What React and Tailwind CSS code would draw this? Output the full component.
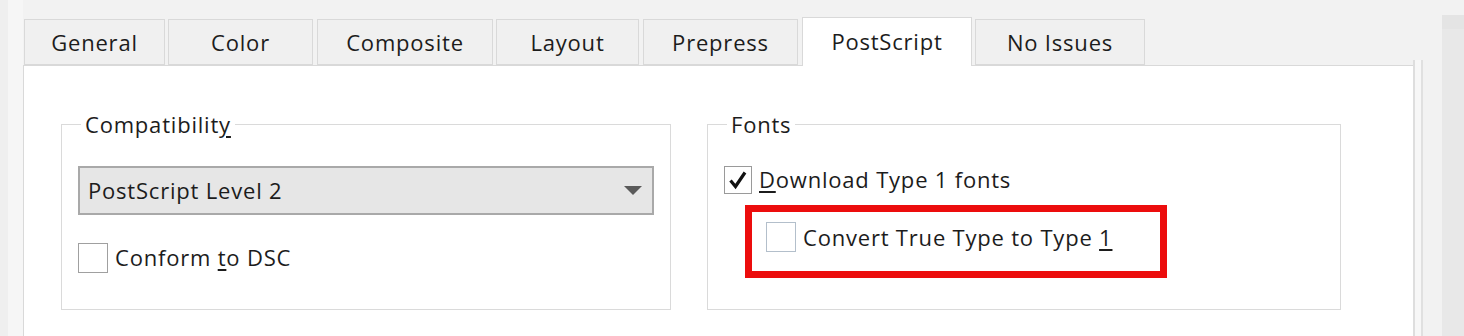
import React from 'react';

const tabs = [
  { label: 'General', cls: 'w-[141px]' },
  { label: 'Color', cls: 'w-[145px] ml-[3px]' },
  { label: 'Composite', cls: 'w-[176px] ml-[4px]' },
  { label: 'Layout', cls: 'w-[143px] ml-[3px]' },
  { label: 'Prepress', cls: 'w-[155px] ml-[4px]' },
  { label: 'PostScript', cls: 'w-[170px] ml-[4px]', active: true },
  { label: 'No Issues', cls: 'w-[170px] ml-[3px]' },
];

function Check({ checked, className = '' }) {
  return (
    <span className={`flex items-center justify-center bg-white border ${className}`}>
      {checked && (
        <svg width="22" height="22" viewBox="0 0 22 22">
          <path d="M3.5 11.5 L8.5 17.5 L18 3.5" fill="none" stroke="#111" strokeWidth="3.2" strokeLinejoin="miter" />
        </svg>
      )}
    </span>
  );
}

function Group({ title, className = '', children }) {
  return (
    <fieldset className={`border border-[#dadada] h-[200px] px-[16px] pt-[25px] ${className}`}>
      <legend className="ml-[3px] px-[4px] leading-[28px]">{title}</legend>
      {children}
    </fieldset>
  );
}

export default function App() {
  return (
    <div
      className="w-[1464px] h-[336px] overflow-hidden flex bg-[#f2f2f2] text-[22px] tracking-[0.8px] text-[#1c1c1c]"
      style={{ fontFamily: '"Open Sans", "Noto Sans", sans-serif' }}
    >
      <div className="w-[8px] shrink-0 bg-[#efefef]" />
      <div className="w-[15px] shrink-0 bg-[#f6f6f6]" />

      <div className="w-[1390px] shrink-0 pt-[17px] flex flex-col">
        <div className="flex items-end h-[48px] pl-[1px]">
          {tabs.map((t) =>
            t.active ? (
              <div
                key={t.label}
                className={`${t.cls} h-[49px] -mb-[1px] relative z-10 bg-white border border-b-0 border-[#d9d9d9] flex items-center justify-center pb-[1px]`}
              >
                {t.label}
              </div>
            ) : (
              <div
                key={t.label}
                className={`${t.cls} h-[46px] bg-[#f0f0f0] border border-[#d9d9d9] flex items-center justify-center pt-[1px]`}
              >
                {t.label}
              </div>
            )
          )}
        </div>

        <div className="flex-1 bg-white border-l border-t border-[#d9d9d9] pl-[37px] pt-[44px] flex gap-[36px]">
          <Group title={<>Compatibilit<span className="underline underline-offset-[3px]">y</span></>} className="w-[610px]">
            <div className="h-[49px] mt-[3px] bg-[#e6e6e6] border-2 border-[#a9a9a9] flex items-center justify-between pl-[8px] pr-[10px]">
              <span>PostScript Level 2</span>
              <svg width="18" height="10" viewBox="0 0 18 10">
                <path d="M0 0 H18 L9 9 Z" fill="#5a5a5a" />
              </svg>
            </div>
            <div className="flex items-center mt-[26px]">
              <Check className="w-[30px] h-[30px] border-[#a0a0a0]" />
              <span className="ml-[7px]">
                Conform <span className="underline underline-offset-[3px]">t</span>o DSC
              </span>
            </div>
          </Group>

          <Group title="Fonts" className="w-[634px]">
            <div className="flex items-center">
              <Check checked className="w-[28px] h-[28px] border-[#9a9a9a]" />
              <span className="ml-[7px]">
                <span className="underline underline-offset-[3px]">D</span>ownload Type 1 fonts
              </span>
            </div>
            <div className="ml-[21px] mt-[9px] w-[422px] h-[73px] border-[7px] border-[#ec0d0d] flex items-center pl-[14px] pb-[9px]">
              <Check className="w-[30px] h-[30px] border-[#b3bfcb]" />
              <span className="ml-[7px]">
                Convert True Type to Type <span className="underline underline-offset-[3px]">1</span>
              </span>
            </div>
          </Group>
        </div>
      </div>

      <div className="w-[29px] shrink-0 pt-[60px] flex">
        <div className="w-[2px] bg-[#dedede]" />
        <div className="w-[6px] bg-[#f7f7f7]" />
        <div className="w-[2px] bg-[#e0e0e0]" />
      </div>
      <div className="flex-1 mt-[15px] bg-[#e8e8e8] border-t-[14px] border-[#e4e4e4]" />
    </div>
  );
}
